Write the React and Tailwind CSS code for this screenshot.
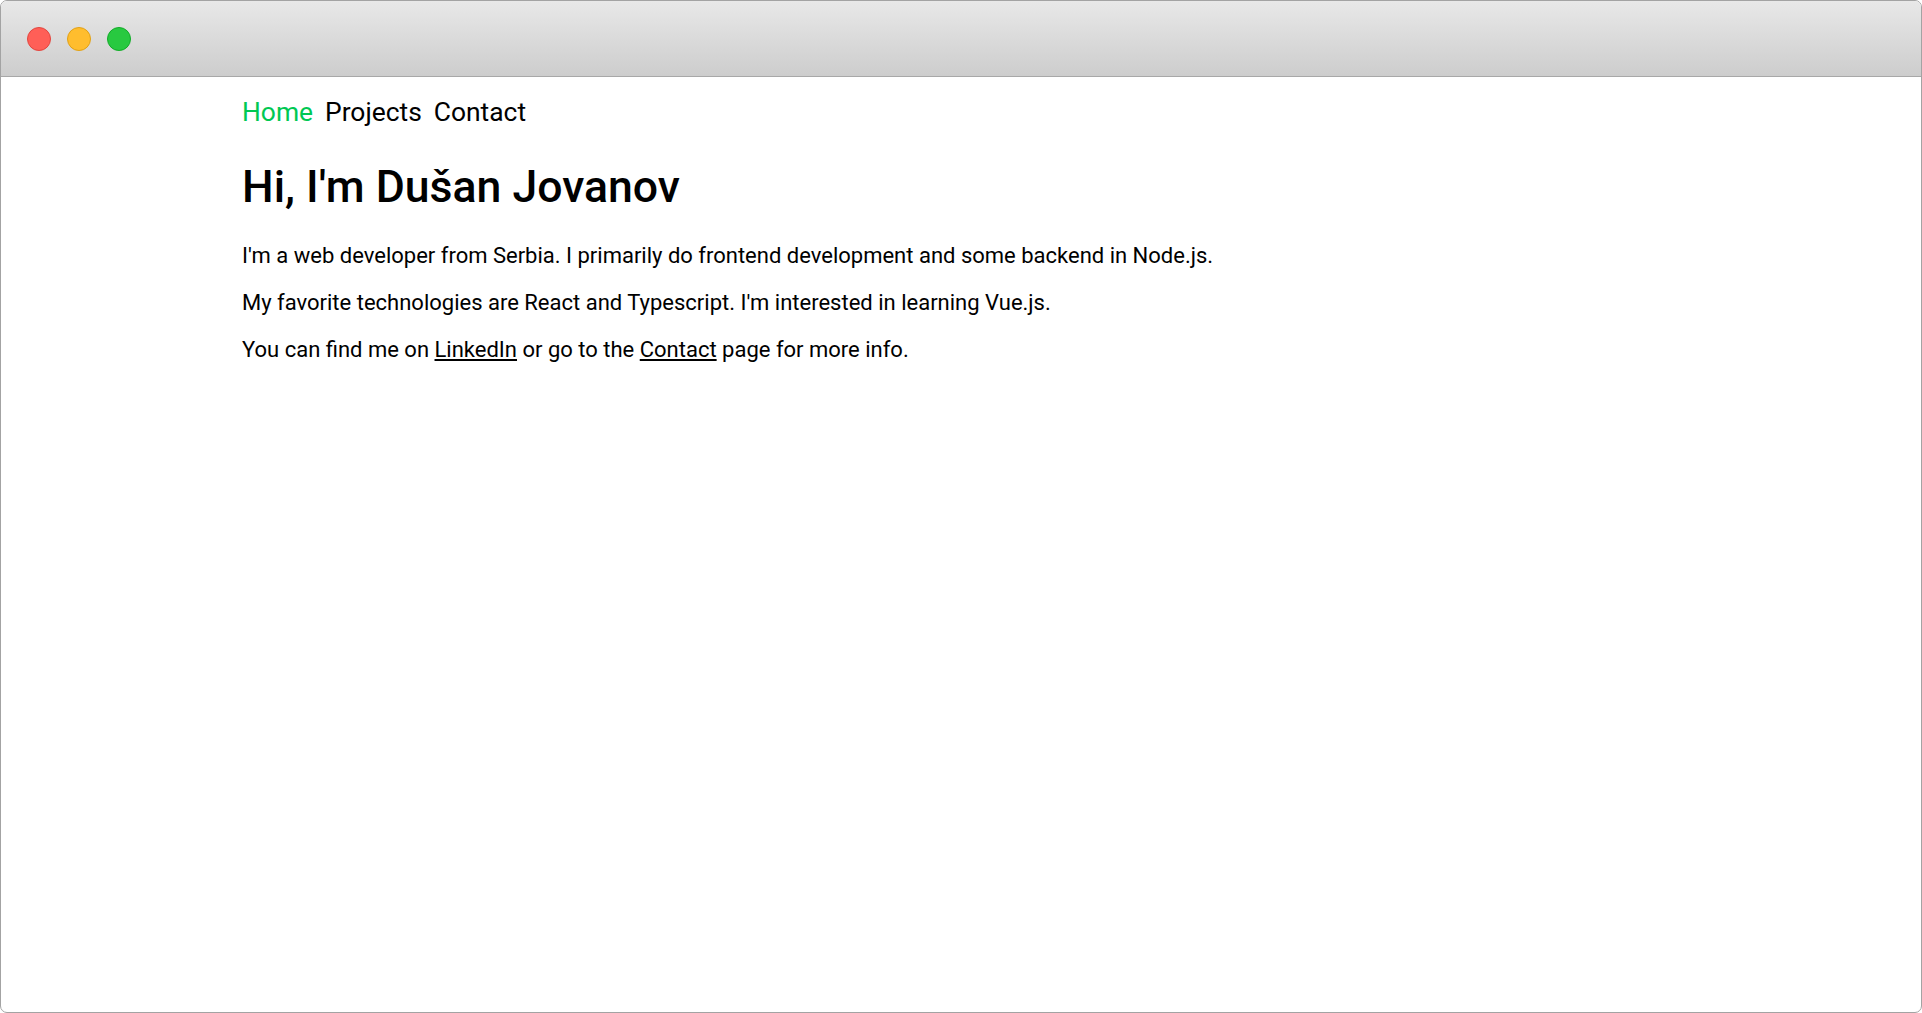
export default function App() {
    const links = ["Home", "Projects", "Contact"];

    return (
        <div className="w-[1922px] h-[1013px] bg-white font-['Roboto',sans-serif] text-black">
            <div className="h-full flex flex-col border border-[#a3a3a3] rounded-[7px] overflow-hidden">
                {/* window chrome */}
                <div className="h-[76px] shrink-0 flex items-center gap-4 pl-[26px] bg-gradient-to-b from-[#e8e8e8] to-[#cdcdcd] border-b border-[#a8a8a8]">
                    <span className="w-6 h-6 rounded-full bg-[#ff5f57] border border-[#e2463f]" />
                    <span className="w-6 h-6 rounded-full bg-[#ffbd2e] border border-[#e1a116]" />
                    <span className="w-6 h-6 rounded-full bg-[#28c940] border border-[#12ac28]" />
                </div>

                <main className="pl-[241px] pt-[20px]">
                    <nav className="flex gap-[12px] text-[26.4px] leading-[31px]">
                        {links.map((l, i) => (
                            <a key={l} href="#" className={i === 0 ? "text-[#00c853]" : "text-black"}>{l}</a>
                        ))}
                    </nav>

                    <h1 className="mt-[33px] text-[44.6px] font-medium leading-[52px]">Hi, I'm Dušan Jovanov</h1>

                    <div className="mt-[30px] flex flex-col gap-[22px] text-[22px] leading-[25px]">
                        <p>I'm a web developer from Serbia. I primarily do frontend development and some backend in Node.js.</p>
                        <p>My favorite technologies are React and Typescript. I'm interested in learning Vue.js.</p>
                        <p>
                            You can find me on <a href="#" className="underline">LinkedIn</a> or go to the{" "}
                            <a href="#" className="underline">Contact</a> page for more info.
                        </p>
                    </div>
                </main>
            </div>
        </div>
    );
}
